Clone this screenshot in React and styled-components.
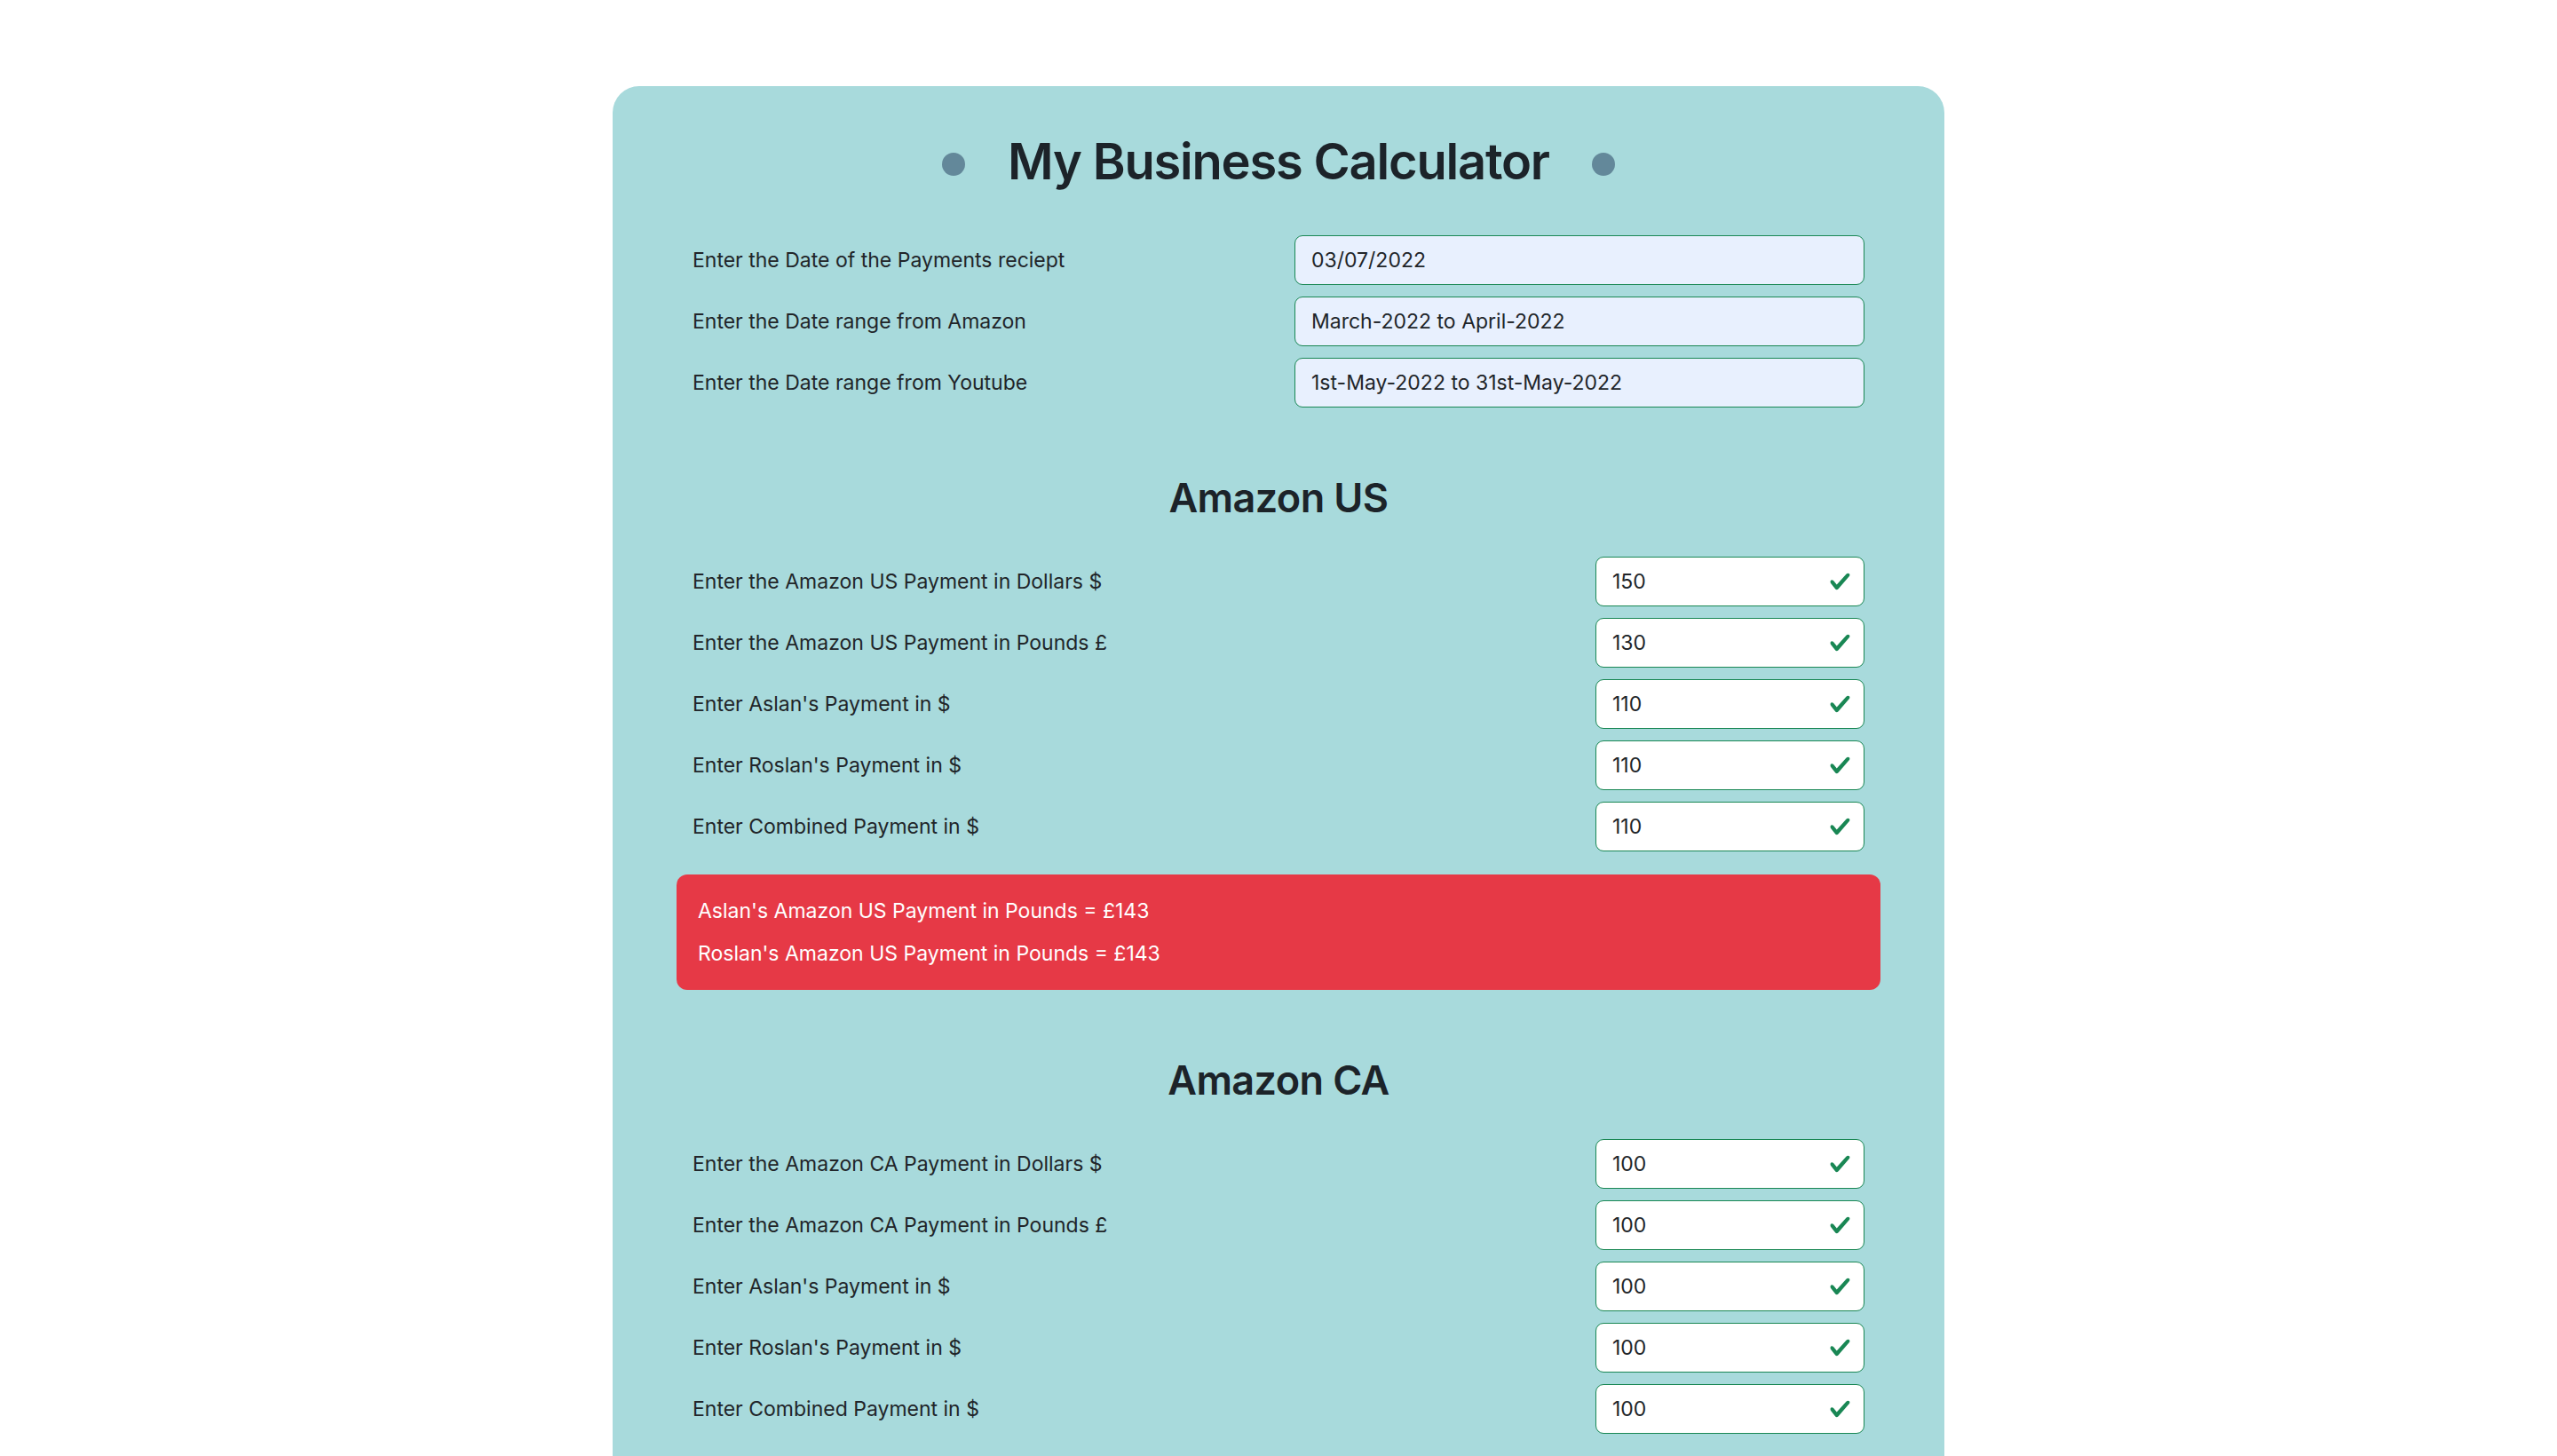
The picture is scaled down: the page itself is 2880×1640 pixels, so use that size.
import React from "react";
import styled, { createGlobalStyle } from "styled-components";

const GlobalStyle = createGlobalStyle`
  html, body {
    margin: 0;
    padding: 0;
    background: #ffffff;
  }
  body {
    font-family: Inter, "Noto Sans", "Liberation Sans", sans-serif;
    color: #212529;
    font-size: 24px;
  }
  * {
    box-sizing: border-box;
  }
`;

const Page = styled.div`
  padding-top: 97px;
`;

const Card = styled.main`
  width: 1500px;
  margin: 0 auto;
  background: #a8dadc;
  border-radius: 30px;
  padding: 50px 72px 60px;
  min-height: 1600px;
`;

const Header = styled.header`
  display: flex;
  align-items: center;
  justify-content: center;
  gap: 48px;
  margin-bottom: 48px;
`;

const Dot = styled.span`
  width: 26px;
  height: 26px;
  border-radius: 50%;
  background: rgba(29, 53, 87, 0.5);
  margin-top: 6px;
`;

const Title = styled.h1`
  margin: 0;
  font-size: 56px;
  line-height: 70px;
  font-weight: 600;
  color: #1c2329;
  letter-spacing: -1.2px;
`;

const Section = styled.section`
  display: flex;
  flex-direction: column;
  gap: 13px;
`;

const Heading = styled.h2`
  margin: 74px 0 39px;
  text-align: center;
  font-size: 45px;
  line-height: 55px;
  font-weight: 600;
  color: #1c2329;
  letter-spacing: -0.6px;
`;

const Row = styled.div`
  display: flex;
  align-items: center;
  justify-content: space-between;
  padding: 0 18px;
  height: 56px;
`;

const Label = styled.label`
  font-size: 23px;
  color: #212529;
`;

const Field = styled.div`
  position: relative;
  width: ${(p) => (p.wide ? "642px" : "303px")};
  height: 56px;
`;

const Input = styled.input`
  width: 100%;
  height: 100%;
  border: 1.5px solid #198754;
  border-radius: 9px;
  background: ${(p) => (p.filled ? "#e8f0fe" : "#ffffff")};
  padding: 0 ${(p) => (p.filled ? "18px" : "54px")} 0 18px;
  font-family: inherit;
  font-size: 23px;
  color: #212529;
  outline: none;
`;

const Check = styled.svg`
  position: absolute;
  right: 15px;
  top: 50%;
  transform: translateY(-50%);
  width: 25px;
  height: 25px;
`;

const Alert = styled.div`
  margin-top: 13px;
  background: ${(p) => p.bg};
  color: #ffffff;
  border-radius: 12px;
  padding: 25px 24px;
  display: flex;
  flex-direction: column;
  gap: 16px;
`;

const AlertLine = styled.p`
  margin: 0;
  font-size: 23px;
  line-height: 32px;
`;

const CheckIcon = () => (
  <Check viewBox="0 0 8 8">
    <path
      fill="#198754"
      d="M2.3 6.73.6 4.53c-.4-1.04.46-1.4 1.1-.8l1.1 1.4 3.4-3.8c.6-.63 1.6-.27 1.2.7l-4 4.6c-.43.5-.8.4-1.1.1z"
    />
  </Check>
);

const dateRows = [
  ["Enter the Date of the Payments reciept", "03/07/2022"],
  ["Enter the Date range from Amazon", "March-2022 to April-2022"],
  ["Enter the Date range from Youtube", "1st-May-2022 to 31st-May-2022"],
];

const markets = [
  {
    name: "US",
    values: ["150", "130", "110", "110", "110"],
    color: "#e63946",
    result: "143",
  },
  {
    name: "CA",
    values: ["100", "100", "100", "100", "100"],
    color: "#457b9d",
    result: "100",
  },
];

const PaymentRow = ({ label, value }) => (
  <Row>
    <Label>{label}</Label>
    <Field>
      <Input defaultValue={value} />
      <CheckIcon />
    </Field>
  </Row>
);

const Market = ({ name, values, color, result }) => {
  const labels = [
    `Enter the Amazon ${name} Payment in Dollars $`,
    `Enter the Amazon ${name} Payment in Pounds £`,
    "Enter Aslan's Payment in $",
    "Enter Roslan's Payment in $",
    "Enter Combined Payment in $",
  ];
  return (
    <>
      <Heading>Amazon {name}</Heading>
      <Section>
        {labels.map((l, i) => (
          <PaymentRow key={l} label={l} value={values[i]} />
        ))}
        <Alert bg={color}>
          <AlertLine>Aslan's Amazon {name} Payment in Pounds = £{result}</AlertLine>
          <AlertLine>Roslan's Amazon {name} Payment in Pounds = £{result}</AlertLine>
        </Alert>
      </Section>
    </>
  );
};

export default function App() {
  return (
    <Page>
      <GlobalStyle />
      <Card>
        <Header>
          <Dot />
          <Title>My Business Calculator</Title>
          <Dot />
        </Header>
        <Section>
          {dateRows.map(([label, value]) => (
            <Row key={label}>
              <Label>{label}</Label>
              <Field wide>
                <Input filled defaultValue={value} />
              </Field>
            </Row>
          ))}
        </Section>
        {markets.map((m) => (
          <Market key={m.name} {...m} />
        ))}
      </Card>
    </Page>
  );
}
